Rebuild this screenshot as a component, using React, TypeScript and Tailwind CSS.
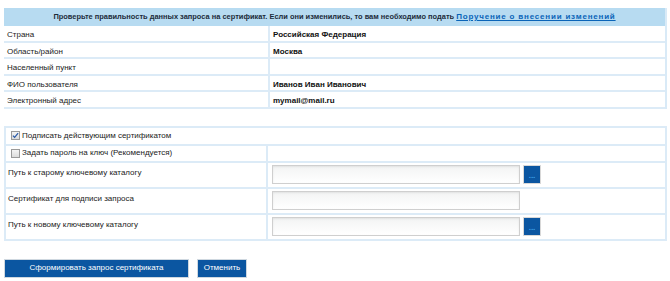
import React from "react";

const rows = [
  { label: "Страна", value: "Российская Федерация" },
  { label: "Область/район", value: "Москва" },
  { label: "Населенный пункт", value: "" },
  { label: "ФИО пользователя", value: "Иванов Иван Иванович" },
  { label: "Электронный адрес", value: "mymail@mail.ru" },
];

function Checkbox({ checked }: { checked: boolean }) {
  return (
    <span className="inline-flex w-[9px] h-[9px] mr-[2px] border border-[#9a9a9a] bg-gradient-to-b from-[#f4f4f4] to-[#dcdcdc] items-center justify-center align-[-1px]">
      {checked && (
        <svg viewBox="0 0 8 8" className="w-[7px] h-[7px]">
          <path d="M1 4.2 L3 6.2 L7 1.2" stroke="#2a5aa8" strokeWidth="1.4" fill="none" />
        </svg>
      )}
    </span>
  );
}

function PathInput({ withButton }: { withButton?: boolean }) {
  return (
    <div className="flex items-center gap-[3px]">
      <div className="w-[248px] h-[19px] border border-[#cfcfcf] bg-gradient-to-b from-[#f3f4f4] to-white shadow-[inset_0_1px_2px_rgba(0,0,0,0.08)]" />
      {withButton && (
        <button className="w-[18px] h-[19px] bg-[#0b56a1] border border-[#d8d8d8] flex items-end justify-center pb-[5px]">
          <span className="text-[#3fa0e8] text-[8px] leading-[4px] font-bold">...</span>
        </button>
      )}
    </div>
  );
}

export default function App() {
  return (
    <div className="w-[670px] h-[281px] bg-white text-[#222] text-[8px] font-['Liberation_Sans',Arial,sans-serif] pt-[8px] pl-[4px]">
      {/* request data table */}
      <div className="w-[663px] border-r-2 border-[#d9eaf7]">
        <div className="h-[18px] bg-[#b7dbf1] flex items-center justify-center font-bold text-[#1c2b3a] text-[7.45px]">
          <span>
            Проверьте правильность данных запроса на сертификат. Если они изменились, то вам необходимо подать{" "}
            <a href="#" className="text-[#0a64b8] underline text-[8px] tracking-[0.8px]">Поручение о внесении изменений</a>
          </span>
        </div>
        {rows.map((r) => (
          <div key={r.label} className="h-[16.5px] grid grid-cols-[266px_1fr] border-b-2 border-[#dcebf7]">
            <div className="pl-[3px] pt-[3px] border-r-2 border-[#dcebf7]">{r.label}</div>
            <div className="pl-[3px] pt-[3px] font-bold text-[#111]">{r.value}</div>
          </div>
        ))}
      </div>

      {/* signing options table */}
      <div className="mt-[17px] w-[663px] border-2 border-[#dcebf7] border-b-0">
        <div className="h-[18px] border-b-2 border-[#dcebf7] pl-[5px] flex items-center">
          <Checkbox checked />
          Подписать действующим сертификатом
        </div>
        <div className="h-[17px] grid grid-cols-[262px_1fr] border-b-2 border-[#dcebf7]">
          <div className="pl-[5px] flex items-center border-r-2 border-[#dcebf7]">
            <Checkbox checked={false} />
            Задать пароль на ключ (Рекомендуется)
          </div>
          <div />
        </div>
        <div className="h-[26px] grid grid-cols-[262px_1fr] border-b-2 border-[#dcebf7]">
          <div className="pl-[2px] pt-[4px] border-r-2 border-[#dcebf7]">Путь к старому ключевому каталогу</div>
          <div className="pl-[4px] pt-[2px]"><PathInput withButton /></div>
        </div>
        <div className="h-[26px] grid grid-cols-[262px_1fr] border-b-2 border-[#dcebf7]">
          <div className="pl-[2px] pt-[4px] border-r-2 border-[#dcebf7]">Сертификат для подписи запроса</div>
          <div className="pl-[4px] pt-[2px]"><PathInput /></div>
        </div>
        <div className="h-[26px] grid grid-cols-[262px_1fr] border-b-2 border-[#dcebf7]">
          <div className="pl-[2px] pt-[4px] border-r-2 border-[#dcebf7]">Путь к новому ключевому каталогу</div>
          <div className="pl-[4px] pt-[2px]"><PathInput withButton /></div>
        </div>
      </div>

      {/* actions */}
      <div className="mt-[18px] flex gap-[8px]">
        <button className="w-[185px] h-[19px] bg-[#0b56a1] border border-[#cfd8e0] text-white text-[8px]">
          Сформировать запрос сертификата
        </button>
        <button className="w-[50px] h-[19px] bg-[#0b56a1] border border-[#cfd8e0] text-white text-[8px]">
          Отменить
        </button>
      </div>
    </div>
  );
}
